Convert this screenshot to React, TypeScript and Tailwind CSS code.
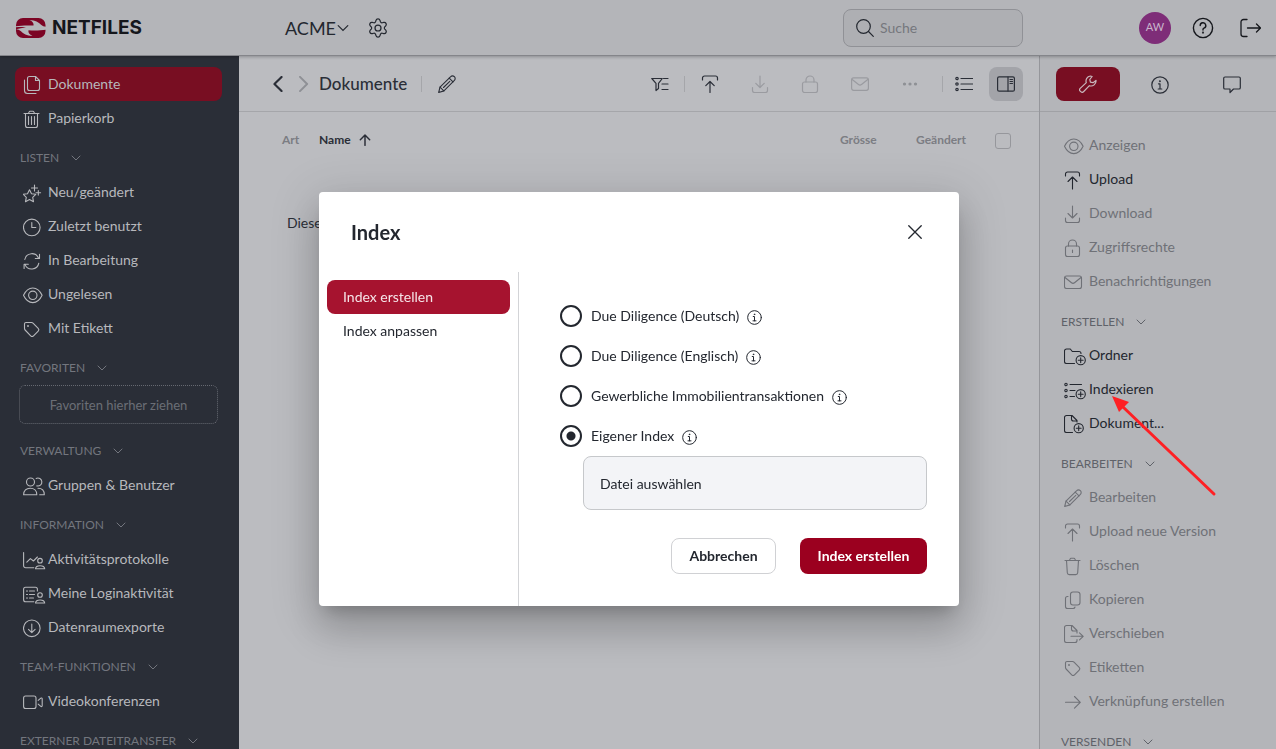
import { useState, type ReactNode } from 'react';
import clsx from 'clsx';

const icons: Record<string, ReactNode> = {
  documents: (
    <>
      <path d="M6.5 4.5h6l4 4v8a2 2 0 0 1-2 2h-8a2 2 0 0 1-2-2v-10a2 2 0 0 1 2-2z" />
      <path d="M12.5 4.5v4h4M1.5 8v10.5a3 3 0 0 0 3 3H13" />
    </>
  ),
  bin: (
    <>
      <path d="M1 7.5h15M5.5 7.5l.6-1.6a1 1 0 0 1 1-.7h2.8a1 1 0 0 1 1 .7l.6 1.6" />
      <path d="M2.5 7.5v12a2 2 0 0 0 2 2h8a2 2 0 0 0 2-2v-12M5.5 10.5v8M8.5 10.5v8M11.5 10.5v8" />
    </>
  ),
  sparkle: (
    <>
      <path d="M6.5 9.8l2 4 4.3.5-3.1 3 .8 4.4-4-2.1-4 2.1.8-4.4-3.1-3 4.3-.5z" />
      <path d="M11.5 5v6M8.5 8h6M15.3 10.5v4.6M13 12.8h4.6" />
    </>
  ),
  clock: (
    <>
      <circle cx="8.8" cy="13.4" r="8.3" />
      <path d="M8.8 8.5v5h4" />
    </>
  ),
  refresh: (
    <>
      <path d="M1.8 11.5a7.2 7.2 0 0 1 13.8-1.2M16.5 6.3v4.2h-4.2" />
      <path d="M15.8 15.2A7.2 7.2 0 0 1 2 16.4M1.1 20.5v-4.2h4.2" />
    </>
  ),
  eye: (
    <>
      <path d="M.5 13.3C2.5 9 6 6 9.8 6s7.3 3 9.3 7.3c-2 4.3-5.5 7.3-9.3 7.3S2.5 17.6.5 13.3z" />
      <circle cx="9.8" cy="13.3" r="4.2" />
    </>
  ),
  tag: (
    <>
      <path d="M1.5 8A1.5 1.5 0 0 1 3 6.5h5.6a2 2 0 0 1 1.4.6l5.2 5.2a2 2 0 0 1 0 2.8l-4.7 4.7a2 2 0 0 1-2.8 0L2.1 14a2 2 0 0 1-.6-1.4z" />
      <circle cx="5" cy="10" r=".4" />
    </>
  ),
  users: (
    <>
      <circle cx="7.5" cy="9" r="4" />
      <path d="M.6 21.7c0-4 2.7-6.5 6.6-6.5s6.6 2.5 6.6 6.5z" />
      <path d="M13.2 5.4a4 4 0 1 1 .6 7.5M15 15.3c3.8 0 6.3 2.4 6.3 6.4h-4.6" />
    </>
  ),
  activity: (
    <>
      <path d="M.6 5.5v13.2a2 2 0 0 0 2 2h8.2M3.8 15.2l3.6-3.6 3 2.4 4-4" />
      <circle cx="17" cy="13.7" r="2.3" />
      <path d="M12.5 21.7c.2-2 1.8-3 4.6-3s4.4 1 4.6 3z" />
    </>
  ),
  logins: (
    <>
      <path d="M14.4 10V8.3a2 2 0 0 0-2-2H2.6a2 2 0 0 0-2 2v10.4a2 2 0 0 0 2 2h8.2" />
      <path d="M3.5 10h1M3.5 13.5h1M3.5 17h1M6.5 10h5M6.5 13.5h5M6.5 17h4" />
      <circle cx="17" cy="14" r="2.3" />
      <path d="M12.5 22c.2-2 1.8-3 4.6-3s4.4 1 4.6 3z" />
    </>
  ),
  exports: (
    <>
      <circle cx="8.8" cy="13.3" r="8.3" />
      <path d="M8.8 9v8.6M5.5 14.4l3.3 3.2 3.3-3.2" />
    </>
  ),
  video: (
    <>
      <rect x=".6" y="7" width="12.4" height="12.5" rx="2" />
      <path d="M15.2 11.4l2.6-2.2c.6-.5 1.4-.2 1.4.6v7c0 .8-.8 1.1-1.4.6l-2.6-2.2" />
    </>
  ),
  upload: <path d="M1.5 9V7a2 2 0 0 1 2-2h10a2 2 0 0 1 2 2v2M8.5 22V10M4 14.5L8.5 10l4.5 4.5" />,
  download: <path d="M1.5 17v2.5a2 2 0 0 0 2 2h10a2 2 0 0 0 2-2V17M8.5 5v12M4 12.5L8.5 17l4.5-4.5" />,
  lock: (
    <>
      <rect x="1.5" y="11" width="14" height="10.5" rx="2" />
      <path d="M4.5 11V9a4 4 0 0 1 8 0v2M8.5 15v2.5" />
    </>
  ),
  mail: (
    <>
      <rect x=".5" y="7" width="17" height="12.5" rx="2" />
      <path d="M1 8.5l6.5 5.3a2.4 2.4 0 0 0 3 0L17 8.5" />
    </>
  ),
  folderAdd: (
    <>
      <path d="M10.5 20.5h-8a2 2 0 0 1-2-2V8a2 2 0 0 1 2-2h3.8l2 2.5H15a2 2 0 0 1 2 2" />
      <circle cx="16.7" cy="17.2" r="4.6" />
      <path d="M16.7 14.8v4.8M14.3 17.2h4.8" />
    </>
  ),
  indexAdd: (
    <>
      <circle cx="2" cy="7.5" r="1.2" />
      <circle cx="2" cy="13.5" r="1.2" />
      <circle cx="2" cy="19.5" r="1.2" />
      <path d="M6 7.5h11.5M6 13.5h5M6 19.5h4.5" />
      <circle cx="16.7" cy="17.2" r="4.6" />
      <path d="M16.7 14.8v4.8M14.3 17.2h4.8" />
    </>
  ),
  documentAdd: (
    <>
      <path d="M8.5 21.5h-6a2 2 0 0 1-2-2v-13a2 2 0 0 1 2-2H8l5 5V11M7.5 4.5V8a2 2 0 0 0 2 2H13" />
      <circle cx="14.7" cy="17.2" r="4.6" />
      <path d="M14.7 14.8v4.8M12.3 17.2h4.8" />
    </>
  ),
  pencil: (
    <>
      <path d="M.7 21.5L2 16.2 12.7 5.6a2.5 2.5 0 0 1 3.6 0l.1.1a2.5 2.5 0 0 1 0 3.6L5.9 19.9z" />
      <path d="M2 16.2l3.9 3.7M11.2 7.2l3.8 3.7M5.5 16.5l6.3-6.2" />
    </>
  ),
  trash: (
    <>
      <path d="M1 7.5h15M5.5 7.5l.6-1.6a1 1 0 0 1 1-.7h2.8a1 1 0 0 1 1 .7l.6 1.6" />
      <path d="M2.5 7.5l.8 12.3a2 2 0 0 0 2 1.8h6.4a2 2 0 0 0 2-1.8l.8-12.3" />
    </>
  ),
  copy: (
    <>
      <rect x="6.5" y="5" width="9.5" height="13" rx="2.5" />
      <path d="M4 9.5h-.5a2 2 0 0 0-2 2v8a2 2 0 0 0 2 2H9a2 2 0 0 0 2-1.5" />
    </>
  ),
  move: (
    <>
      <path d="M13 18.5v1a2 2 0 0 1-2 2H2.5a2 2 0 0 1-2-2v-13a2 2 0 0 1 2-2H8l5 5V12M7.5 4.5V8a2 2 0 0 0 2 2H13" />
      <path d="M7 15.3h12M15.5 11.8l3.7 3.5-3.7 3.5" />
    </>
  ),
  arrow: <path d="M1.5 13.3h14.7M10.5 7.5l5.8 5.8-5.8 5.8" />,
};

function Icon({ name, className }: { name: string; className?: string }) {
  return (
    <svg
      viewBox="0 0 24 24"
      className={clsx('size-6 shrink-0', className)}
      fill="none"
      stroke="currentColor"
      strokeWidth="1.1"
      strokeLinecap="round"
      strokeLinejoin="round"
      aria-hidden="true"
    >
      {icons[name]}
    </svg>
  );
}

// Glyphs drawn centred on an 18px grid, used in the bars and the dialog
function Glyph({ children, className, width = 1.2 }: { children: ReactNode; className?: string; width?: number }) {
  return (
    <svg
      viewBox="0 0 18 18"
      className={clsx('shrink-0', className ?? 'size-[18px]')}
      fill="none"
      stroke="currentColor"
      strokeWidth={width}
      strokeLinecap="round"
      strokeLinejoin="round"
      aria-hidden="true"
    >
      {children}
    </svg>
  );
}

function Chevron({ className }: { className?: string }) {
  return (
    <svg viewBox="0 0 10 10" className={clsx('shrink-0', className)} fill="none" stroke="currentColor" strokeLinecap="round" aria-hidden="true">
      <path d="M1 3l4 4 4-4" />
    </svg>
  );
}

function InfoGlyph({ className }: { className?: string }) {
  return (
    <Glyph className={className}>
      <circle cx="9" cy="9" r="8.2" />
      <path d="M7.5 7.8H9V13M7.2 13h3.6" />
      <circle cx="8.9" cy="5.2" r=".4" />
    </Glyph>
  );
}

type Item = { icon: string; label: string; active?: boolean; enabled?: boolean; marked?: boolean };
type Section = { title?: string; items: Item[]; dropzone?: string };

const navSections: Section[] = [
  {
    items: [
      { icon: 'documents', label: 'Dokumente', active: true },
      { icon: 'bin', label: 'Papierkorb' },
    ],
  },
  {
    title: 'LISTEN',
    items: [
      { icon: 'sparkle', label: 'Neu/geändert' },
      { icon: 'clock', label: 'Zuletzt benutzt' },
      { icon: 'refresh', label: 'In Bearbeitung' },
      { icon: 'eye', label: 'Ungelesen' },
      { icon: 'tag', label: 'Mit Etikett' },
    ],
  },
  { title: 'FAVORITEN', items: [], dropzone: 'Favoriten hierher ziehen' },
  { title: 'VERWALTUNG', items: [{ icon: 'users', label: 'Gruppen & Benutzer' }] },
  {
    title: 'INFORMATION',
    items: [
      { icon: 'activity', label: 'Aktivitätsprotokolle' },
      { icon: 'logins', label: 'Meine Loginaktivität' },
      { icon: 'exports', label: 'Datenraumexporte' },
    ],
  },
  { title: 'TEAM-FUNKTIONEN', items: [{ icon: 'video', label: 'Videokonferenzen' }] },
  { title: 'EXTERNER DATEITRANSFER', items: [] },
];

const actionSections: Section[] = [
  {
    items: [
      { icon: 'eye', label: 'Anzeigen' },
      { icon: 'upload', label: 'Upload', enabled: true },
      { icon: 'download', label: 'Download' },
      { icon: 'lock', label: 'Zugriffsrechte' },
      { icon: 'mail', label: 'Benachrichtigungen' },
    ],
  },
  {
    title: 'ERSTELLEN',
    items: [
      { icon: 'folderAdd', label: 'Ordner', enabled: true },
      { icon: 'indexAdd', label: 'Indexieren', enabled: true, marked: true },
      { icon: 'documentAdd', label: 'Dokument...', enabled: true },
    ],
  },
  {
    title: 'BEARBEITEN',
    items: [
      { icon: 'pencil', label: 'Bearbeiten' },
      { icon: 'upload', label: 'Upload neue Version' },
      { icon: 'trash', label: 'Löschen' },
      { icon: 'copy', label: 'Kopieren' },
      { icon: 'move', label: 'Verschieben' },
      { icon: 'tag', label: 'Etiketten' },
      { icon: 'arrow', label: 'Verknüpfung erstellen' },
    ],
  },
  { title: 'VERSENDEN', items: [] },
];

const indexOptions = [
  'Due Diligence (Deutsch)',
  'Due Diligence (Englisch)',
  'Gewerbliche Immobilientransaktionen',
  'Eigener Index',
];

function Logo() {
  return (
    <a href="#" className="flex items-center gap-1.5 text-[#15171c]" aria-label="Netfiles">
      <svg viewBox="0 0 30 20" className="h-5 w-[30px]" aria-hidden="true">
        <rect width="29.5" height="20" rx="7" fill="#7c0424" />
        <path
          fill="#b4b5b9"
          d="M0 8.2c5-.7 11-1 17.500-.6.6-2.300-1-4.300-4-5.600 6 .2 9 2.200 11.500 4.700 1.500 1.300 3 1.800 5 2v3c-5 .7-11 1-17.500.6-.6 2.300 1 4.300 4 5.600-6-.2-9-2.200-11.500-4.700C3.500 11.900 2 11.400 0 11.200c3-.5 6.500-1.100 10-1.900C6.500 9 3 9 0 9.300z"
        />
      </svg>
      <span className="font-['Inter',sans-serif] text-[19px] leading-6 font-bold">NETFILES</span>
    </a>
  );
}

function Header() {
  return (
    <header className="relative z-10 flex h-14 shrink-0 items-center border-b border-[#84858a] bg-[#b4b5b9] text-[#23272f] shadow-[0_1px_3px_rgba(0,0,0,0.25)]">
      <div className="w-[285px] pl-4">
        <Logo />
      </div>
      <button className="flex items-center gap-px text-lg">
        ACME
        <Chevron className="size-3" />
      </button>
      <button className="ml-[19px]" aria-label="Einstellungen">
        <svg viewBox="0 0 24 24" className="size-5" fill="none" stroke="currentColor" strokeWidth="1.5" strokeLinejoin="round" aria-hidden="true">
          <path d="M9.600 2.800a2.500 2.500 0 0 1 4.800 0l.5 1.600a2 2 0 0 0 2.300 1.300l1.700-.4a2.500 2.500 0 0 1 2.400 4.100l-1.200 1.300a2 2 0 0 0 0 2.600l1.200 1.300a2.500 2.500 0 0 1-2.400 4.100l-1.700-.4a2 2 0 0 0-2.300 1.300l-.5 1.600a2.500 2.500 0 0 1-4.800 0l-.5-1.600a2 2 0 0 0-2.300-1.300l-1.700.4a2.500 2.500 0 0 1-2.400-4.100l1.200-1.300a2 2 0 0 0 0-2.600L2.700 9.400a2.500 2.500 0 0 1 2.400-4.100l1.700.4a2 2 0 0 0 2.300-1.300z" />
          <circle cx="12" cy="12" r="3.6" />
        </svg>
      </button>

      <label className="ml-auto flex h-[38px] w-[180px] items-center gap-1.5 rounded-lg border border-[#909196] bg-[#aeafb3] pl-3">
        <Glyph>
          <circle cx="7.5" cy="7.5" r="6.8" />
          <path d="M12.5 12.5l4.800 4.800" />
        </Glyph>
        <input
          type="search"
          aria-label="Suche"
          placeholder="Suche"
          className="w-full min-w-0 bg-transparent text-sm outline-none placeholder:text-[#75777d]"
        />
      </label>
      <div className="ml-[116px] flex items-center pr-[15px]">
        <button className="size-8 rounded-full bg-[#7e2d78] text-[11px] text-[#c9b5cc]">AW</button>
        <button className="ml-[21px] text-[#15171c]" aria-label="Hilfe">
          <svg viewBox="0 0 22 22" className="size-[22px]" fill="none" stroke="currentColor" strokeWidth="1.4" strokeLinecap="round" aria-hidden="true">
            <circle cx="11" cy="11" r="9.6" />
            <path d="M8.200 8.600a2.800 2.800 0 1 1 3.800 2.600c-.7.3-1 .7-1 1.400v.4" />
            <circle cx="11" cy="15.6" r=".4" />
          </svg>
        </button>
        <button className="ml-6 text-[#15171c]" aria-label="Abmelden">
          <svg viewBox="0 0 23 20" className="h-5 w-[23px]" fill="none" stroke="currentColor" strokeWidth="1.3" strokeLinecap="round" strokeLinejoin="round" aria-hidden="true">
            <path d="M9 1.500H5.500a2.500 2.500 0 0 0-2.500 2.500v12a2.500 2.500 0 0 0 2.500 2.500H9M9.500 10h13M18.500 6l4 4-4 4" />
          </svg>
        </button>
      </div>
    </header>
  );
}

function SectionTitle({ title, className }: { title: string; className: string }) {
  return (
    <button className={clsx('flex h-10 items-center gap-3 text-xs', className)}>
      {title}
      <Chevron className="size-2.5" />
    </button>
  );
}

function Sidebar() {
  return (
    <nav className="w-[239px] shrink-0 overflow-hidden bg-[#2a2e37] pt-[11px] pr-[17px] pl-[15px] text-sm text-[#b7b8bc]">
      {navSections.map((section, i) => (
        <section key={i}>
          {section.title && <SectionTitle title={section.title} className="pt-1.5 pl-[5px] text-[#73767e]" />}
          {section.dropzone && (
            <div className="mr-1 mb-1 ml-1 flex h-[39px] items-center justify-center rounded-md border border-dotted border-[#666971] pt-0.5 text-[13px] text-[#6b6e76]">
              {section.dropzone}
            </div>
          )}
          <ul>
            {section.items.map((item) => (
              <li key={item.label}>
                <a
                  href="#"
                  className={clsx(
                    'flex h-[34px] items-center gap-px rounded-lg pl-2',
                    item.active && 'bg-[#780e22]',
                  )}
                >
                  <Icon name={item.icon} />
                  {item.label}
                </a>
              </li>
            ))}
          </ul>
        </section>
      ))}
    </nav>
  );
}

function ToolButton({ label, children, className }: { label: string; children: ReactNode; className?: string }) {
  return (
    <button aria-label={label} className={clsx('flex size-[34px] items-center justify-center rounded-lg', className)}>
      {children}
    </button>
  );
}

function Toolbar() {
  return (
    <div className="flex h-14 items-center border-b border-[#a5a6aa] pr-4 pl-[31px] text-[#2a2e37]">
      <button aria-label="Zurück">
        <Glyph className="size-4" width={2.4}>
          <path d="M13 1L5 9l8 8" />
        </Glyph>
      </button>
      <button aria-label="Vor" className="ml-2.5 text-[#8e9095]">
        <Glyph className="size-4" width={2.2}>
          <path d="M4.500 1l8 8-8 8" />
        </Glyph>
      </button>
      <h1 className="ml-[7px] text-[17px] font-medium">Dokumente</h1>
      <div className="ml-3.5 h-4 w-px bg-[#a5a6aa]" />
      <button aria-label="Umbenennen" className="ml-4">
        <Icon name="pencil" className="-mt-0.5" />
      </button>

      <div className="ml-auto flex items-center">
        <ToolButton label="Filter">
          <Glyph>
            <path d="M.8 3.500h10.500L7.500 8.300v5.200L5 15.500V8.300z" />
            <path d="M12.500 3.500h4.500M11 9h6M11 14.500h6" />
          </Glyph>
        </ToolButton>
        <div className="mr-2 ml-[7px] h-4 w-px bg-[#a5a6aa]" />
        <ToolButton label="Upload">
          <Glyph>
            <path d="M1.500 5V3a2 2 0 0 1 2-2h11a2 2 0 0 1 2 2v2M9 17.500V6.500M4.800 10.700L9 6.500l4.200 4.200" />
          </Glyph>
        </ToolButton>
        <ToolButton label="Download" className="ml-4 text-[#9a9ba0]">
          <Glyph>
            <path d="M1.500 12.500v3a2 2 0 0 0 2 2h11a2 2 0 0 0 2-2v-3M9 1v11.500M4.800 8.300L9 12.500l4.200-4.200" />
          </Glyph>
        </ToolButton>
        <ToolButton label="Zugriffsrechte" className="ml-4 text-[#9a9ba0]">
          <Glyph>
            <rect x="1.5" y="7" width="15" height="10.5" rx="2" />
            <path d="M5 7V5a4 4 0 0 1 8 0v2" />
          </Glyph>
        </ToolButton>
        <ToolButton label="Benachrichtigungen" className="ml-4 text-[#9a9ba0]">
          <Glyph>
            <rect x=".6" y="2.8" width="16.8" height="12.5" rx="2" />
            <path d="M1.200 4.500l6.300 5a2.400 2.400 0 0 0 3 0l6.300-5" />
          </Glyph>
        </ToolButton>
        <ToolButton label="Mehr" className="ml-4 text-[#8e9095]">
          <Glyph>
            <g fill="currentColor">
              <circle cx="3.5" cy="9" r="1" />
              <circle cx="9" cy="9" r="1" />
              <circle cx="14.5" cy="9" r="1" />
            </g>
          </Glyph>
        </ToolButton>
        <div className="mr-1 ml-[15px] h-4 w-px bg-[#a5a6aa]" />
        <ToolButton label="Listenansicht">
          <Glyph>
            <circle cx="2" cy="3.5" r="1.2" />
            <circle cx="2" cy="9" r="1.2" />
            <circle cx="2" cy="14.5" r="1.2" />
            <path d="M6 3.500h11.500M6 9h11.500M6 14.500h11.500" />
          </Glyph>
        </ToolButton>
        <ToolButton label="Seitenleiste" className="ml-2 bg-[#a3a4a9]">
          <Glyph>
            <rect x=".6" y="1.8" width="16.8" height="14.4" rx="1.5" />
            <path d="M11 2v14M13 4.500h2.500M13 6.500h2.500M13 8.500h2.500" />
          </Glyph>
        </ToolButton>
      </div>
    </div>
  );
}

function FileList() {
  return (
    <main className="min-w-0 flex-1 bg-[#bbbcc0]">
      <Toolbar />
      <table className="w-full table-fixed text-left text-xs text-[#7b7d83]">
        <colgroup>
          <col className="w-20" />
          <col />
          <col className="w-[76px]" />
          <col className="w-[79px]" />
          <col className="w-11" />
        </colgroup>
        <thead>
          <tr className="h-14">
            <th className="pl-[43px] font-bold">Art</th>
            <th className="text-[#2a2e37]">
              <button className="flex items-center gap-2 font-bold">
                Name
                <Glyph className="size-3" width={2.2}>
                  <path d="M9 17V1.500M2 8.500l7-7 7 7" />
                </Glyph>
              </button>
            </th>
            <th className="font-bold">Grösse</th>
            <th className="font-bold">Geändert</th>
            <th>
              <input
                type="checkbox"
                aria-label="Alle auswählen"
                className="mt-0.5 block size-4 appearance-none rounded-[3px] border border-[#96979c]"
              />
            </th>
          </tr>
        </thead>
      </table>
      <p className="pt-[45px] pl-12 text-sm text-[#2a2e37]">Diese</p>
    </main>
  );
}

function Pointer() {
  return (
    <svg viewBox="0 0 106 102" className="pointer-events-none absolute top-6 left-[71px] z-20 h-[102px] w-[106px]" aria-hidden="true">
      <path d="M103 98L12 11" stroke="#fe2024" strokeWidth="3" strokeLinecap="round" />
      <path d="M1 0l17 6L8 16z" fill="#fe2024" />
    </svg>
  );
}

function ActionPanel() {
  return (
    <aside className="w-[237px] shrink-0 overflow-hidden border-l border-[#95969b] bg-[#b4b5b9] text-[#2a2e37]">
      <div className="flex h-14 items-center gap-2 border-b border-[#a0a1a5] pl-4">
        <button aria-label="Werkzeuge" className="flex h-[34px] w-16 items-center justify-center rounded-lg bg-[#780e22] text-[#c9b9be]">
          <Glyph>
            <path d="M11.300 1a5 5 0 0 0-4 6.600L1.200 13.400a2 2 0 0 0 0 2.800l.5.500a2 2 0 0 0 2.800 0l5.900-6a5 5 0 0 0 6.600-5.300l-3 2.300-2.600-.6-.6-2.600 2.300-3a5 5 0 0 0-1.800-.5z" />
          </Glyph>
        </button>
        <button aria-label="Informationen" className="flex h-[34px] w-16 items-center justify-center pt-0.5">
          <InfoGlyph />
        </button>
        <button aria-label="Kommentare" className="flex h-[34px] w-16 items-center justify-center pt-0.5">
          <Glyph>
            <path d="M2 1h14a1.300 1.300 0 0 1 1.300 1.300v9.400A1.300 1.300 0 0 1 16 13h-5.500L7 16.500V13H2A1.300 1.300 0 0 1 .7 11.700V2.300A1.300 1.300 0 0 1 2 1z" />
          </Glyph>
        </button>
      </div>
      <div className="pt-4 text-sm">
        {actionSections.map((section, i) => (
          <section key={i}>
            {section.title && <SectionTitle title={section.title} className="pt-2 pl-[21px] text-[#5f6269]" />}
            <ul>
              {section.items.map((item) => (
                <li key={item.label} className="relative">
                  <button
                    className={clsx(
                      'flex h-[34px] w-full items-center gap-px pl-6 text-left',
                      item.enabled ? 'text-[#23272f]' : 'text-[#6f7177]',
                    )}
                  >
                    <Icon name={item.icon} />
                    {item.label}
                  </button>
                  {item.marked && <Pointer />}
                </li>
              ))}
            </ul>
          </section>
        ))}
      </div>
    </aside>
  );
}

function IndexDialog() {
  const [selected, setSelected] = useState('Eigener Index');

  return (
    <div className="pointer-events-none fixed inset-0 z-10 flex items-start justify-center pt-48 pl-0.5">
      <div
        role="dialog"
        aria-labelledby="dialog-title"
        className="pointer-events-auto w-[640px] rounded bg-white text-sm text-[#23272f] shadow-[0_11px_15px_-7px_rgba(0,0,0,0.2),0_24px_38px_3px_rgba(0,0,0,0.14),0_9px_46px_8px_rgba(0,0,0,0.12)]"
      >
        <div className="flex h-20 items-center justify-between pr-[37px] pl-8">
          <h2 id="dialog-title" className="text-xl font-bold">Index</h2>
          <button aria-label="Schliessen">
            <Glyph className="size-3.5" width={1.7}>
              <path d="M1 1l16 16M17 1L1 17" />
            </Glyph>
          </button>
        </div>
        <div className="flex">
          <div className="w-[200px] shrink-0 border-r border-[#d3d4d7] p-2">
            <button className="flex h-[34px] w-full items-center rounded-lg bg-[#a6132f] px-4 text-[#f6e4e8]">
              Index erstellen
            </button>
            <button className="flex h-[34px] w-full items-center rounded-lg px-4">Index anpassen</button>
          </div>
          <form className="flex-1 pt-6 pr-8 pb-8 pl-[41px]" onSubmit={(e) => e.preventDefault()}>
            {indexOptions.map((option) => (
              <div key={option} className="flex h-10 items-center gap-2">
                <label className="flex items-center gap-[9px]">
                  <input
                    type="radio"
                    name="index"
                    checked={selected === option}
                    onChange={() => setSelected(option)}
                    className="size-[22px] appearance-none rounded-full border-2 border-[#23272f] checked:bg-[radial-gradient(circle,#23272f_4px,transparent_5px)]"
                  />
                  {option}
                </label>
                <button type="button" aria-label={`Info zu ${option}`} className="pt-0.5">
                  <InfoGlyph className="size-[15px]" />
                </button>
              </div>
            ))}
            <button
              type="button"
              className="ml-[23px] flex h-[54px] w-[calc(100%-23px)] items-center rounded-lg border border-[#c6c8cb] bg-[#f3f4f7] px-4 pt-0.5"
            >
              Datei auswählen
            </button>
            <div className="mt-7 flex justify-end gap-6 font-bold">
              <button type="button" className="h-9 w-[105px] rounded-lg border border-[#d0d1d4]">
                Abbrechen
              </button>
              <button type="submit" className="h-9 w-[127px] rounded-lg bg-[#9b001f] text-white">
                Index erstellen
              </button>
            </div>
          </form>
        </div>
      </div>
    </div>
  );
}

export default function App() {
  return (
    <div className="flex h-screen flex-col overflow-hidden font-['Lato',sans-serif]">
      <Header />
      <div className="flex min-h-0 flex-1">
        <Sidebar />
        <FileList />
        <ActionPanel />
      </div>
      <IndexDialog />
    </div>
  );
}
